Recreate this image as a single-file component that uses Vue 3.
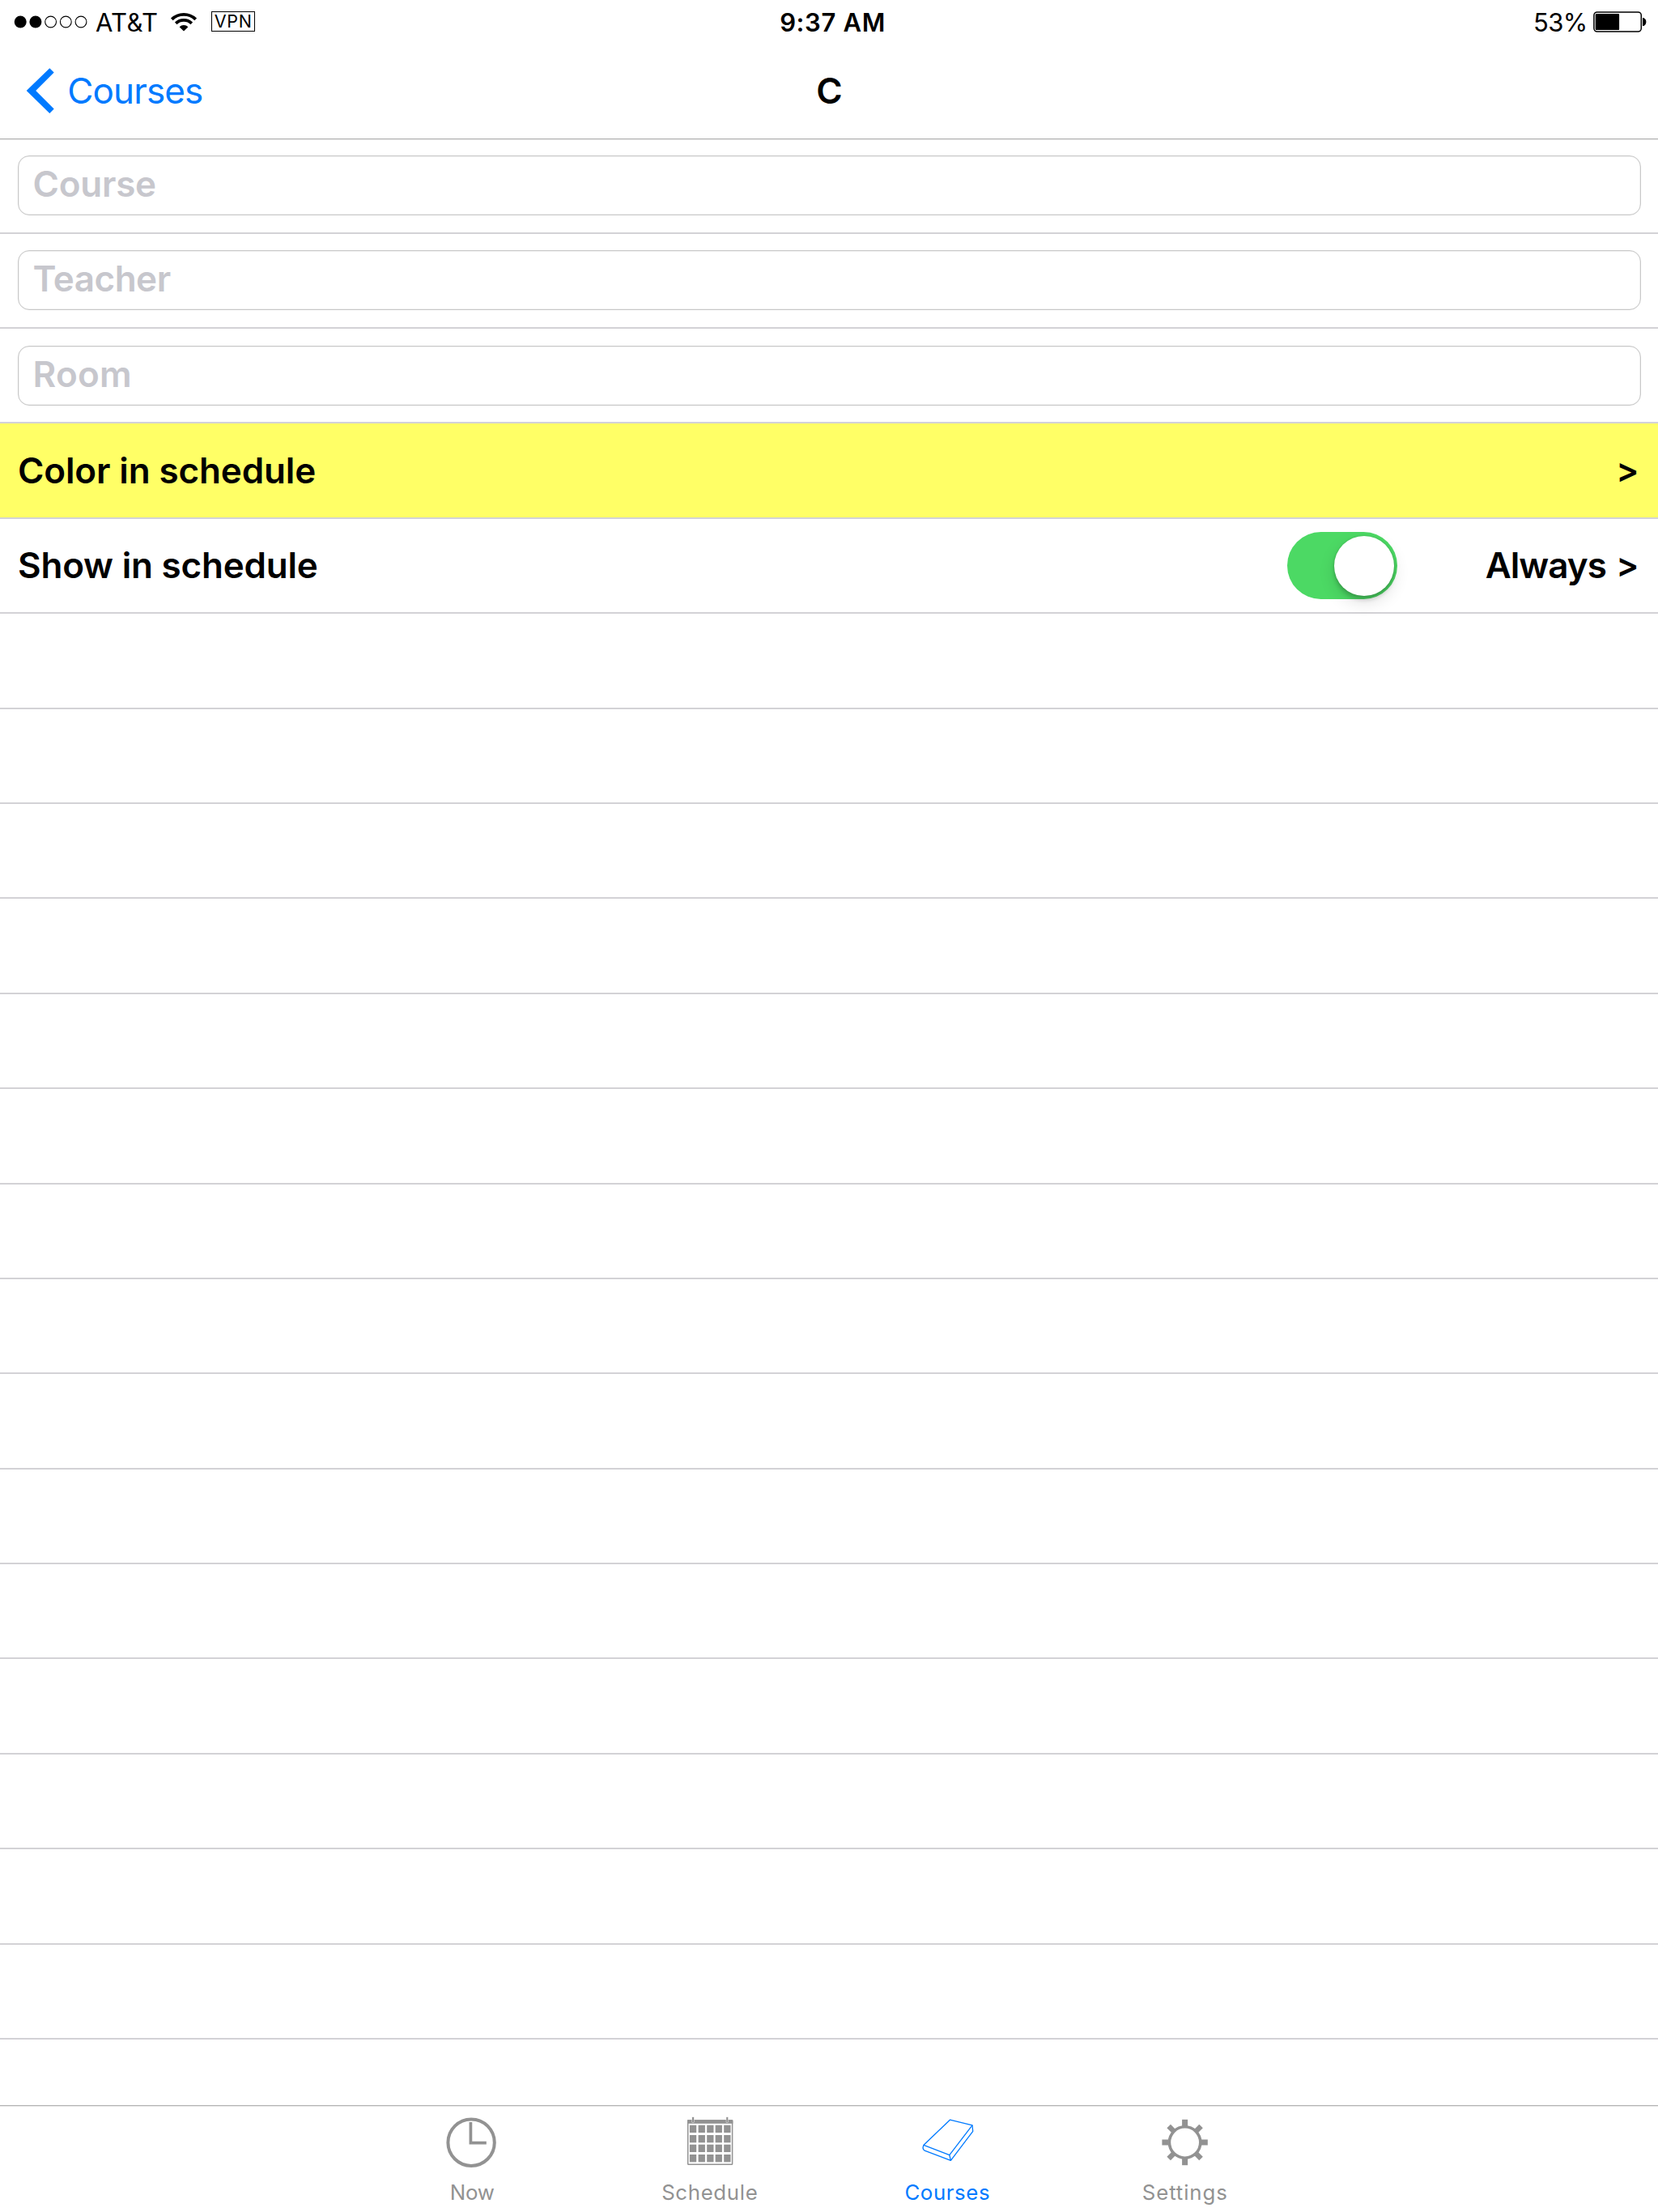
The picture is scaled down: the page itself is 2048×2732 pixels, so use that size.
<script setup>
const fields = [
  { label: 'Course', spacing: '-0.26px' },
  { label: 'Teacher', spacing: '-0.48px' },
  { label: 'Room', spacing: '0.19px' },
]
const signal = [true, true, false, false, false]
const cellX = [14.9, 25.6, 36.2, 46.6, 57.2]
const cellY = [18.7, 31, 42.7, 55]
const teeth = [0, 45, 90, 135, 180, 225, 270, 315]
</script>

<template>
  <div class="screen">
    <header class="header">
      <div class="status">
        <div class="status-left">
          <svg class="dots" width="92" height="18" viewBox="0 0 92 18">
            <circle
              v-for="(on, i) in signal"
              :key="i"
              :cx="8.2 + i * 18.7"
              cy="9"
              :r="on ? 7.5 : 6.9"
              :fill="on ? '#000' : 'none'"
              :stroke="on ? 'none' : '#000'"
              stroke-width="1.1"
            />
          </svg>
          <span class="carrier">AT&amp;T</span>
          <svg class="wifi" width="34" height="26" viewBox="0 0 34 26">
            <path d="M2.3 9.9A20.9 20.9 0 0 1 31.7 9.9" fill="none" stroke="#000" stroke-width="3.9" />
            <path d="M7.2 14.9A14.1 14.1 0 0 1 26.8 14.9" fill="none" stroke="#000" stroke-width="3.7" />
            <path d="M17 24.6L11.6 19.2A7.6 7.6 0 0 1 22.4 19.2Z" />
          </svg>
          <span class="vpn">VPN</span>
        </div>
        <span class="time">9:37 AM</span>
        <div class="status-right">
          <span class="percent">53%</span>
          <svg class="battery" width="66" height="26" viewBox="0 0 66 26">
            <rect x="0.9" y="0.9" width="58.4" height="24.2" rx="4" fill="none" stroke="#000" stroke-width="1.5" />
            <rect x="2.7" y="2.9" width="29.4" height="20.2" rx="1.2" />
            <path d="M61 8h1.2Q65.4 9.5 65.4 13T62.2 18H61Z" />
          </svg>
        </div>
      </div>
      <nav class="nav">
        <a class="back">
          <svg width="36" height="58" viewBox="0 0 36 58">
            <path d="M29.3 1.2L34.7 6.5L12.2 29L34.7 51.5L29.3 57L0.7 29Z" fill="#007aff" />
          </svg>
          <span>Courses</span>
        </a>
        <h1 class="title">C</h1>
        <span></span>
      </nav>
    </header>

    <main class="list">
      <div v-for="f in fields" :key="f.label" class="row">
        <div class="field"><span :style="{ letterSpacing: f.spacing }">{{ f.label }}</span></div>
      </div>
      <div class="row yellow">
        <span class="label color">Color in schedule</span>
        <span class="gt">&gt;</span>
      </div>
      <div class="row">
        <span class="label show">Show in schedule</span>
        <span class="toggle"><span class="knob"></span></span>
        <span class="always">Always</span>
        <span class="gt">&gt;</span>
      </div>
      <div v-for="n in 16" :key="n" class="row"></div>
    </main>

    <footer class="tabs">
      <div class="tab">
        <svg width="80" height="80" viewBox="0 0 80 80">
          <circle cx="39.1" cy="40.2" r="28.7" fill="none" stroke="#929292" stroke-width="4" />
          <path d="M38.4 15V40.7H57.8" fill="none" stroke="#929292" stroke-width="3.7" />
        </svg>
        <span class="now">Now</span>
      </div>
      <div class="tab">
        <svg width="80" height="80" viewBox="0 0 80 80" fill="#929292">
          <rect x="12.7" y="13" width="54.9" height="54.3" rx="0.8" fill="none" stroke="#929292" stroke-width="1.5" />
          <rect x="12" y="12.2" width="56.3" height="4.6" />
          <rect x="17.8" y="8.7" width="2.5" height="7" stroke="#fff" stroke-width="0.4" />
          <rect x="60" y="8.7" width="2.5" height="7" stroke="#fff" stroke-width="0.4" />
          <template v-for="y in cellY" :key="y">
            <rect v-for="x in cellX" :key="x" :x="x" :y="y" width="8.3" height="9.3" />
          </template>
        </svg>
        <span class="schedule">Schedule</span>
      </div>
      <div class="tab active">
        <svg width="80" height="80" viewBox="0 0 80 80" fill="none" stroke="#007aff" stroke-width="1.3" stroke-linejoin="round">
          <path d="M11 43.3L43.4 12.2L71 18.9L42.8 55.7Z" />
          <path d="M11 43.3Q8.8 48.3 12.1 50.1L44.4 62.4L71.7 26.3L71 18.9M42.8 55.7L44.4 62.4" />
        </svg>
        <span class="courses">Courses</span>
      </div>
      <div class="tab">
        <svg width="80" height="80" viewBox="0 0 80 80" fill="#929292">
          <circle cx="39.6" cy="40" r="19.2" fill="none" stroke="#929292" stroke-width="3.6" />
          <rect
            v-for="a in teeth"
            :key="a"
            :x="a % 90 ? 36.4 : 36.1"
            y="11.8"
            :width="a % 90 ? 6.4 : 7"
            height="8.8"
            :transform="`rotate(${a} 39.6 40)`"
          />
        </svg>
        <span class="settings">Settings</span>
      </div>
    </footer>
  </div>
</template>

<style>
body {
  background: #fff;
}
</style>

<style scoped>
.screen {
  width: 2048px;
  height: 2732px;
  display: flex;
  flex-direction: column;
  overflow: hidden;
  background: #fff;
  color: #000;
  font-family: Inter, "Liberation Sans", sans-serif;
  font-size: 44px;
  white-space: nowrap;
}
svg {
  display: block;
  flex: none;
}
.header {
  box-sizing: border-box;
  flex: none;
  height: 172px;
  border-bottom: 1px solid #b2b2b2;
  box-shadow: 0 1px #e8e8e8;
  z-index: 1;
}
.status {
  display: grid;
  grid-template-columns: 1fr auto 1fr;
  align-items: center;
  height: 54.8px;
  font-size: 31px;
}
.status-left,
.status-right {
  display: flex;
  align-items: center;
}
.dots {
  margin-left: 16.5px;
}
.carrier {
  width: 92px;
  margin-left: 9.5px;
  letter-spacing: 0.35px;
}
.wifi {
  margin: -1px 0 0;
}
.vpn {
  box-sizing: border-box;
  width: 54px;
  height: 25px;
  margin: -1px 0 0 16.5px;
  padding-left: 3.2px;
  border: 1.5px solid #000;
  font-size: 21.5px;
  font-weight: 400;
  line-height: 23px;
  letter-spacing: 0.7px;
}
.time {
  padding-left: 9px;
  font-weight: 600;
  letter-spacing: 0.64px;
}
.status-right {
  justify-content: flex-end;
}
.percent {
  letter-spacing: -0.65px;
}
.battery {
  margin: 0 14.5px 0 7px;
}
.nav {
  display: grid;
  grid-template-columns: 1fr auto 1fr;
  align-items: center;
  height: 114.4px;
}
.back {
  display: flex;
  align-items: center;
  padding-left: 32px;
  gap: 15.2px;
  color: #007aff;
  letter-spacing: -0.85px;
}
.title {
  margin: 0;
  padding-left: 1px;
  font-size: 44px;
  font-weight: 600;
}
.list {
  flex: 1;
  min-height: 0;
  margin-top: -0.8px;
  overflow: hidden;
}
.row {
  box-sizing: border-box;
  display: flex;
  align-items: center;
  height: 117.4px;
  padding: 0 21.3px 1px 22px;
  border-bottom: 2px solid #d3d2d6;
  font-weight: 600;
}
.yellow {
  background: #ffff66;
  background-clip: padding-box;
}
.field {
  box-sizing: border-box;
  flex: 1;
  display: flex;
  align-items: center;
  height: 74px;
  margin-top: 1.4px;
  padding: 0 0 4px 17.6px;
  border: 1px solid #c8c8c8;
  border-radius: 14px;
  box-shadow: inset 0 0 0 0.5px #e4e4e4;
  color: #c7c7cd;
}
.label {
  flex: 1;
}
.color {
  letter-spacing: -0.13px;
}
.show {
  letter-spacing: -0.21px;
}
.gt {
  width: 30.5px;
  font-size: 42px;
}
.toggle {
  box-sizing: border-box;
  display: flex;
  justify-content: flex-end;
  width: 136.5px;
  height: 82.6px;
  margin: 1.6px 108.3px 0 0;
  padding: 4.2px;
  border-radius: 42px;
  background: #4cd964;
}
.knob {
  width: 74.7px;
  height: 74.7px;
  border-radius: 50%;
  background: #fff;
  box-shadow: 0 8px 20px rgba(0, 0, 0, 0.12), 0 5px 5px rgba(0, 0, 0, 0.16), 0 0 3px rgba(0, 0, 0, 0.14);
}
.always {
  width: 161.5px;
  letter-spacing: -0.96px;
}
.tabs {
  box-sizing: border-box;
  flex: none;
  display: flex;
  justify-content: center;
  height: 132px;
  padding: 5px 1px 0 0;
  border-top: 1px solid #b2b2b2;
  box-shadow: inset 0 1px #e8e8e8;
  background: #fff;
  z-index: 1;
}
.tab {
  display: flex;
  flex-direction: column;
  align-items: center;
  gap: 6px;
  width: 293.5px;
  color: #929292;
  font-size: 25.8px;
  line-height: 31px;
}
.active {
  color: #007aff;
}
.now {
  letter-spacing: -0.2px;
}
.schedule {
  letter-spacing: 0.66px;
}
.courses {
  letter-spacing: 0.6px;
}
.settings {
  letter-spacing: 0.9px;
}
</style>
